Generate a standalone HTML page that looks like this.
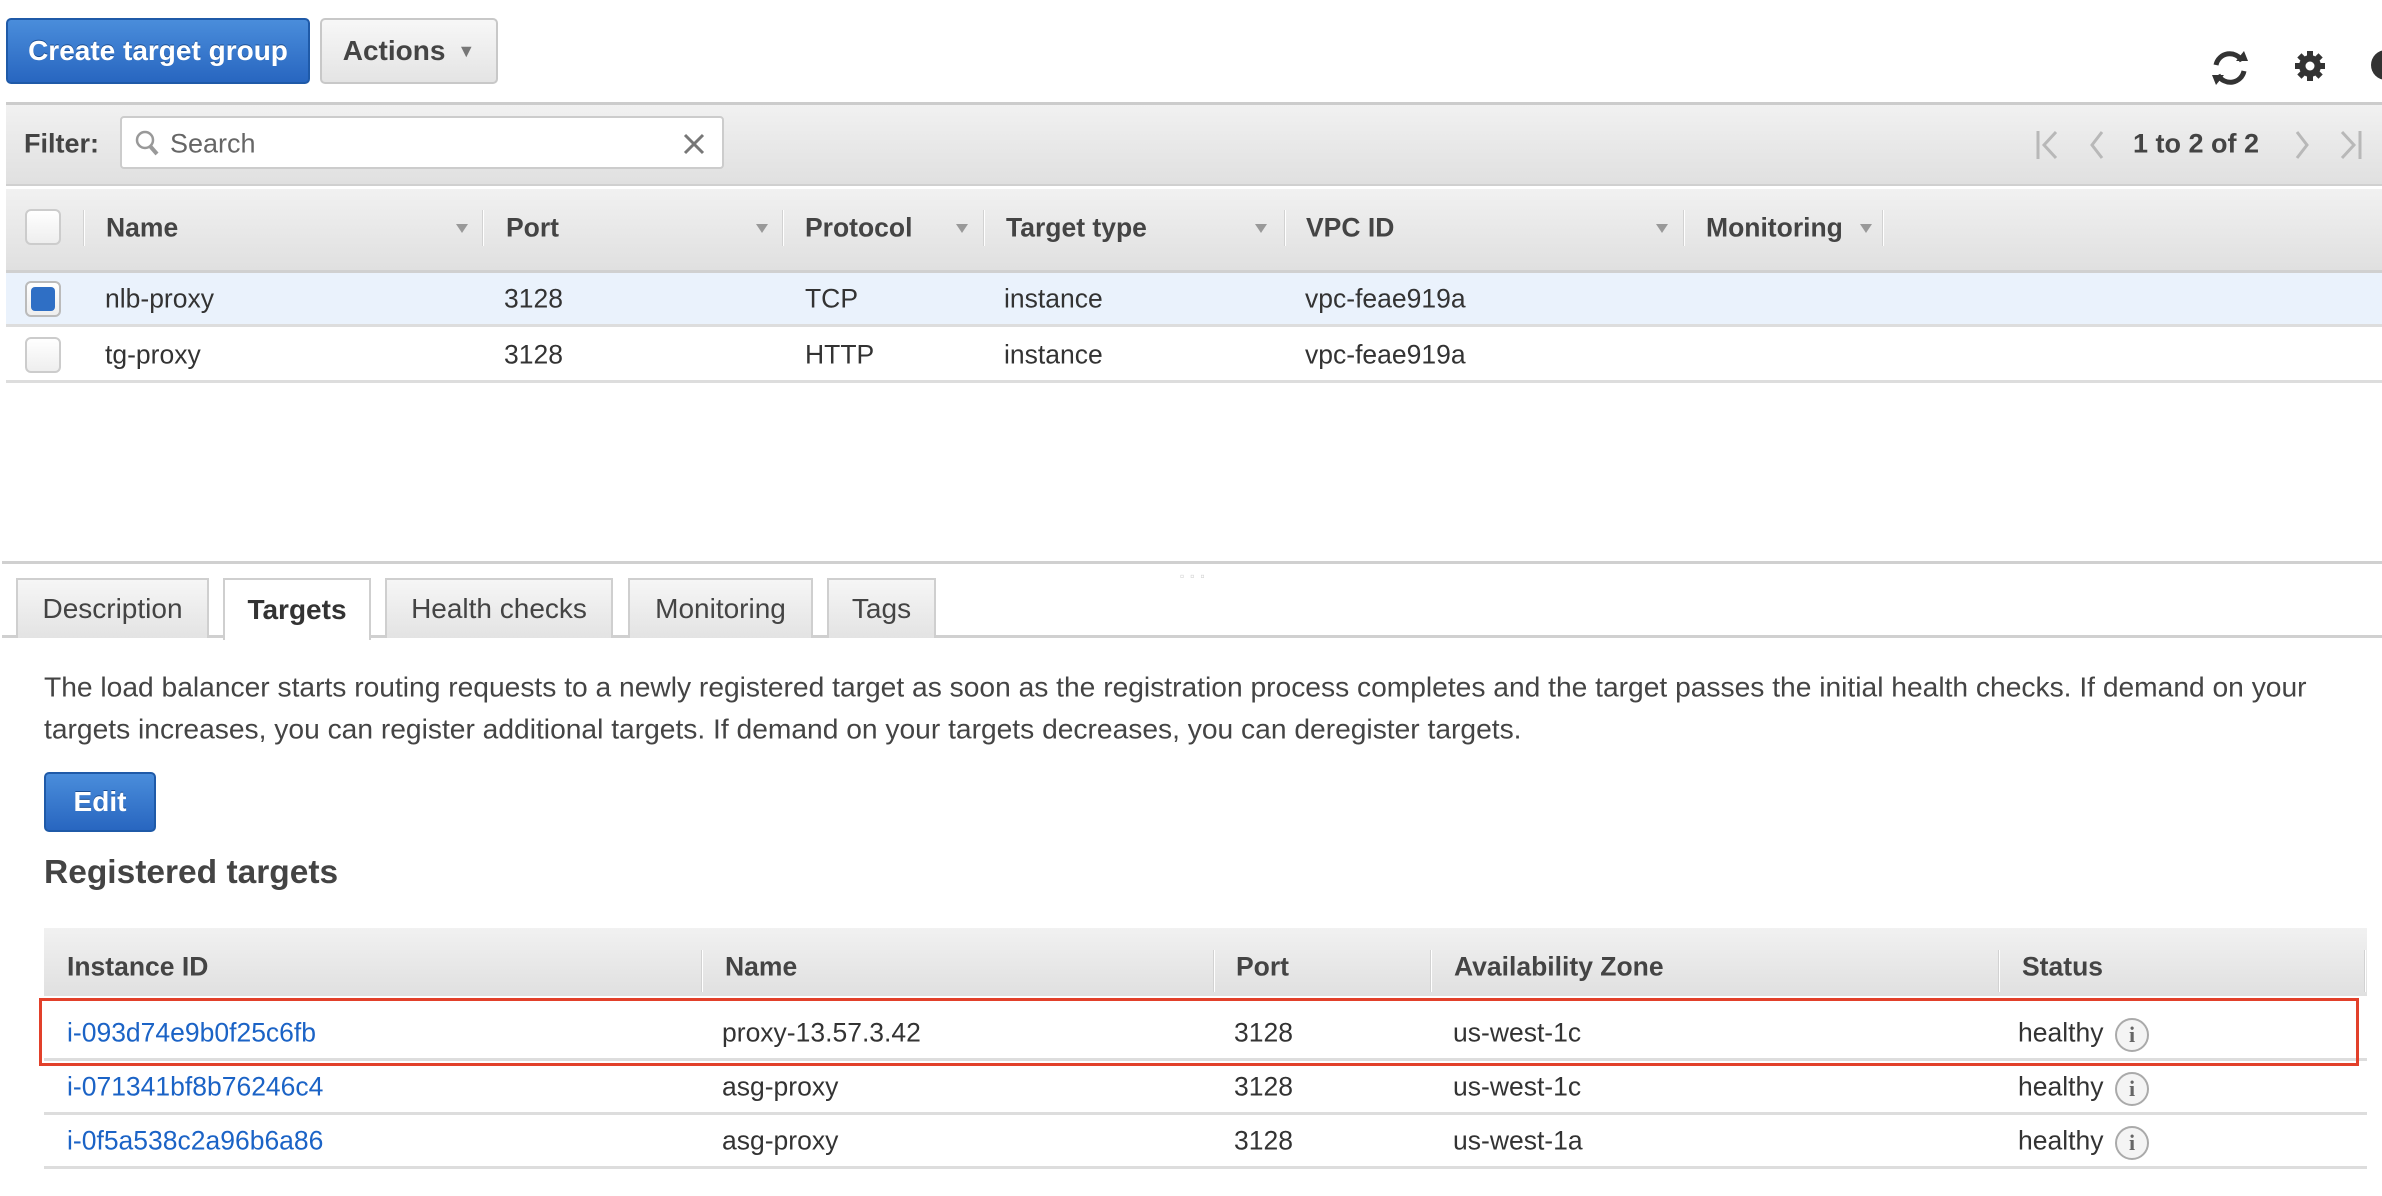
<!DOCTYPE html>
<html><head><meta charset="utf-8"><style>
*{box-sizing:border-box;margin:0;padding:0}
body{width:2382px;height:1196px;background:#fff;font-family:"Liberation Sans",Arial,sans-serif;color:#333;position:relative;overflow:hidden;font-size:25px}
.a{position:absolute}
.btnb{background:linear-gradient(#4a8ddb,#2866c0);border:2px solid #1f5aa8;border-radius:5px;color:#fff;font-weight:bold;display:flex;align-items:center;justify-content:center;text-shadow:0 -1px 0 #1a4c90}
.btng{background:linear-gradient(#f7f7f7,#e4e4e4);border:2px solid #c8c8c8;border-radius:5px;color:#444;font-weight:bold;display:flex;align-items:center;justify-content:center}
.bar{background:linear-gradient(#f1f1f1,#e0e0e0)}
.t{position:absolute;transform:translateY(-50%);white-space:nowrap}
.hd{font-weight:bold;color:#444}
.sep{position:absolute;width:2px;background:#fff;border-left:1px solid #d2d2d2}
.arr{position:absolute;width:0;height:0;border-left:6px solid transparent;border-right:6px solid transparent;border-top:9px solid #999}
.cb{position:absolute;width:36px;height:36px;border:2px solid #ccc;border-radius:6px;background:linear-gradient(#fff,#eee)}
.tab{position:absolute;top:578px;height:60px;background:linear-gradient(#f6f6f6,#e3e3e3);border:2px solid #cfcfcf;border-bottom:none;color:#444;display:flex;align-items:center;justify-content:center;font-size:28px}
.lnk{color:#1b63c6}
.tt{font-size:26.5px}
.info{position:absolute;width:34px;height:34px;border:2px solid #aaa;border-radius:50%;background:#f4f4f4;transform:translateY(-50%);color:#666;font-size:22px;font-weight:bold;text-align:center;line-height:30px;font-family:"Liberation Serif",serif}
</style></head><body>
<div class="a btnb" style="left:6px;top:18px;width:304px;height:66px;font-size:28px">Create target group</div>
<div class="a btng" style="left:320px;top:18px;width:178px;height:66px;font-size:28px">Actions <span style="font-size:18px;color:#777;margin-left:12px">&#9660;</span></div>
<svg class="a" style="left:2208px;top:47px" width="44" height="42" viewBox="0 0 44 42"><path d="M8 18 A14 14 0 0 1 34 14" fill="none" stroke="#333" stroke-width="5"/><path d="M28 14 L40 14 L36 4 Z" fill="#333"/><path d="M36 24 A14 14 0 0 1 10 28" fill="none" stroke="#333" stroke-width="5"/><path d="M16 28 L4 28 L8 38 Z" fill="#333"/></svg>
<svg class="a" style="left:2294px;top:50px" width="32" height="32" viewBox="0 0 32 32"><g fill="#333"><circle cx="16" cy="16" r="11"/><rect x="13" y="1" width="6" height="30"/><rect x="1" y="13" width="30" height="6"/><rect x="13" y="1" width="6" height="30" transform="rotate(45 16 16)"/><rect x="13" y="1" width="6" height="30" transform="rotate(-45 16 16)"/></g><circle cx="16" cy="16" r="4.5" fill="#fff"/></svg>
<div class="a" style="left:2371px;top:50px;width:30px;height:30px;border-radius:50%;background:#333"></div>

<div class="a bar" style="left:6px;top:102px;width:2376px;height:84px;border-top:3px solid #ccc;border-bottom:2px solid #d0d0d0"></div>
<div class="t hd" style="left:24px;top:144px;font-size:27px">Filter:</div>
<div class="a" style="left:120px;top:116px;width:604px;height:53px;background:#fff;border:2px solid #ccc;border-radius:4px"></div>
<svg class="a" style="left:134px;top:129px" width="26" height="28" viewBox="0 0 26 28"><circle cx="11" cy="11" r="8" fill="none" stroke="#999" stroke-width="2.5"/><path d="M16 17 L23 25" stroke="#999" stroke-width="4"/></svg>
<div class="t" style="left:170px;top:144px;color:#666;font-size:27px">Search</div>
<svg class="a" style="left:682px;top:132px" width="24" height="24" viewBox="0 0 24 24"><path d="M3 3L21 21M21 3L3 21" stroke="#777" stroke-width="3"/></svg>
<svg class="a" style="left:2034px;top:129px" width="340" height="32" viewBox="0 0 340 32"><g fill="none" stroke="#b8b8b8" stroke-width="3"><path d="M4 2V30M22 3L10 16L22 29"/><path d="M68 3L58 16L68 29"/><path d="M263 3L273 16L263 29"/><path d="M308 3L320 16L308 29M326 2V30"/></g></svg>
<div class="t hd" style="left:2133px;top:144px;color:#444;font-size:27px">1 to 2 of 2</div>

<div class="a bar" style="left:6px;top:189px;width:2376px;height:84px;border-bottom:3px solid #d0d0d0"></div>
<div class="cb" style="left:25px;top:209px"></div>
<div class="sep" style="left:83px;top:210px;height:36px"></div>
<div class="t hd tt" style="left:106px;top:228px">Name</div><div class="arr" style="left:456px;top:224px"></div>
<div class="sep" style="left:482px;top:210px;height:36px"></div>
<div class="t hd tt" style="left:506px;top:228px">Port</div><div class="arr" style="left:756px;top:224px"></div>
<div class="sep" style="left:782px;top:210px;height:36px"></div>
<div class="t hd tt" style="left:805px;top:228px">Protocol</div><div class="arr" style="left:956px;top:224px"></div>
<div class="sep" style="left:983px;top:210px;height:36px"></div>
<div class="t hd tt" style="left:1006px;top:228px">Target type</div><div class="arr" style="left:1255px;top:224px"></div>
<div class="sep" style="left:1284px;top:210px;height:36px"></div>
<div class="t hd tt" style="left:1306px;top:228px">VPC ID</div><div class="arr" style="left:1656px;top:224px"></div>
<div class="sep" style="left:1683px;top:210px;height:36px"></div>
<div class="t hd tt" style="left:1706px;top:228px">Monitoring</div><div class="arr" style="left:1860px;top:224px"></div>
<div class="sep" style="left:1882px;top:210px;height:36px"></div>

<div class="a" style="left:6px;top:273px;width:2376px;height:54px;background:#eaf2fc;border-bottom:3px solid #ddd"></div>
<div class="cb" style="left:25px;top:281px;border-color:#bbb"><div style="position:absolute;left:4px;top:4px;width:24px;height:24px;border-radius:4px;background:#2f6fc5"></div></div>
<div class="t tt" style="left:105px;top:299px">nlb-proxy</div><div class="t tt" style="left:504px;top:299px">3128</div><div class="t tt" style="left:805px;top:299px">TCP</div><div class="t tt" style="left:1004px;top:299px">instance</div><div class="t tt" style="left:1305px;top:299px">vpc-feae919a</div>
<div class="a" style="left:6px;top:327px;width:2376px;height:56px;border-bottom:3px solid #ddd"></div>
<div class="cb" style="left:25px;top:337px"></div>
<div class="t tt" style="left:105px;top:355px">tg-proxy</div><div class="t tt" style="left:504px;top:355px">3128</div><div class="t tt" style="left:805px;top:355px">HTTP</div><div class="t tt" style="left:1004px;top:355px">instance</div><div class="t tt" style="left:1305px;top:355px">vpc-feae919a</div>

<div class="a" style="left:2px;top:561px;width:2380px;height:3px;background:#d0d0d0"></div>
<div class="a" style="left:1180px;top:569px;color:#ccc;font-size:12px;letter-spacing:6px">&#9643;&#9643;&#9643;</div>
<div class="a" style="left:2px;top:635px;width:2380px;height:3px;background:#d0d0d0"></div>
<div class="tab" style="left:16px;width:193px">Description</div>
<div class="tab" style="left:223px;width:148px;background:#fff;height:62px;font-weight:bold;color:#333">Targets</div>
<div class="tab" style="left:385px;width:228px">Health checks</div>
<div class="tab" style="left:628px;width:185px">Monitoring</div>
<div class="tab" style="left:827px;width:109px">Tags</div>

<div class="t" style="left:44px;top:687px;color:#444;font-size:28.2px">The load balancer starts routing requests to a newly registered target as soon as the registration process completes and the target passes the initial health checks. If demand on your</div>
<div class="t" style="left:44px;top:729px;color:#444;font-size:28.2px">targets increases, you can register additional targets. If demand on your targets decreases, you can deregister targets.</div>
<div class="a btnb" style="left:44px;top:772px;width:112px;height:60px;font-size:28px">Edit</div>
<div class="t" style="left:44px;top:873px;font-weight:bold;font-size:33.5px;color:#444">Registered targets</div>

<div class="a bar" style="left:44px;top:928px;width:2323px;height:68px"></div>
<div class="t hd tt" style="left:67px;top:967px">Instance ID</div>
<div class="sep" style="left:701px;top:950px;height:42px"></div><div class="t hd tt" style="left:725px;top:967px">Name</div>
<div class="sep" style="left:1213px;top:950px;height:42px"></div><div class="t hd tt" style="left:1236px;top:967px">Port</div>
<div class="sep" style="left:1430px;top:950px;height:42px"></div><div class="t hd tt" style="left:1454px;top:967px">Availability Zone</div>
<div class="sep" style="left:1998px;top:950px;height:42px"></div><div class="t hd tt" style="left:2022px;top:967px">Status</div>
<div class="sep" style="left:2364px;top:950px;height:42px"></div>

<div class="a" style="left:44px;top:1058px;width:2323px;height:3px;background:#ddd"></div>
<div class="a" style="left:44px;top:1112px;width:2323px;height:3px;background:#ddd"></div>
<div class="a" style="left:44px;top:1166px;width:2323px;height:3px;background:#ddd"></div>

<div class="t lnk tt" style="left:67px;top:1033px">i-093d74e9b0f25c6fb</div><div class="t tt" style="left:722px;top:1033px">proxy-13.57.3.42</div><div class="t tt" style="left:1234px;top:1033px">3128</div><div class="t tt" style="left:1453px;top:1033px">us-west-1c</div><div class="t tt" style="left:2018px;top:1033px">healthy</div><div class="info" style="left:2115px;top:1035px">i</div>
<div class="t lnk tt" style="left:67px;top:1087px">i-071341bf8b76246c4</div><div class="t tt" style="left:722px;top:1087px">asg-proxy</div><div class="t tt" style="left:1234px;top:1087px">3128</div><div class="t tt" style="left:1453px;top:1087px">us-west-1c</div><div class="t tt" style="left:2018px;top:1087px">healthy</div><div class="info" style="left:2115px;top:1089px">i</div>
<div class="t lnk tt" style="left:67px;top:1141px">i-0f5a538c2a96b6a86</div><div class="t tt" style="left:722px;top:1141px">asg-proxy</div><div class="t tt" style="left:1234px;top:1141px">3128</div><div class="t tt" style="left:1453px;top:1141px">us-west-1a</div><div class="t tt" style="left:2018px;top:1141px">healthy</div><div class="info" style="left:2115px;top:1143px">i</div>

<div class="a" style="left:39px;top:998px;width:2320px;height:68px;border:3px solid #e2402a"></div>
</body></html>
